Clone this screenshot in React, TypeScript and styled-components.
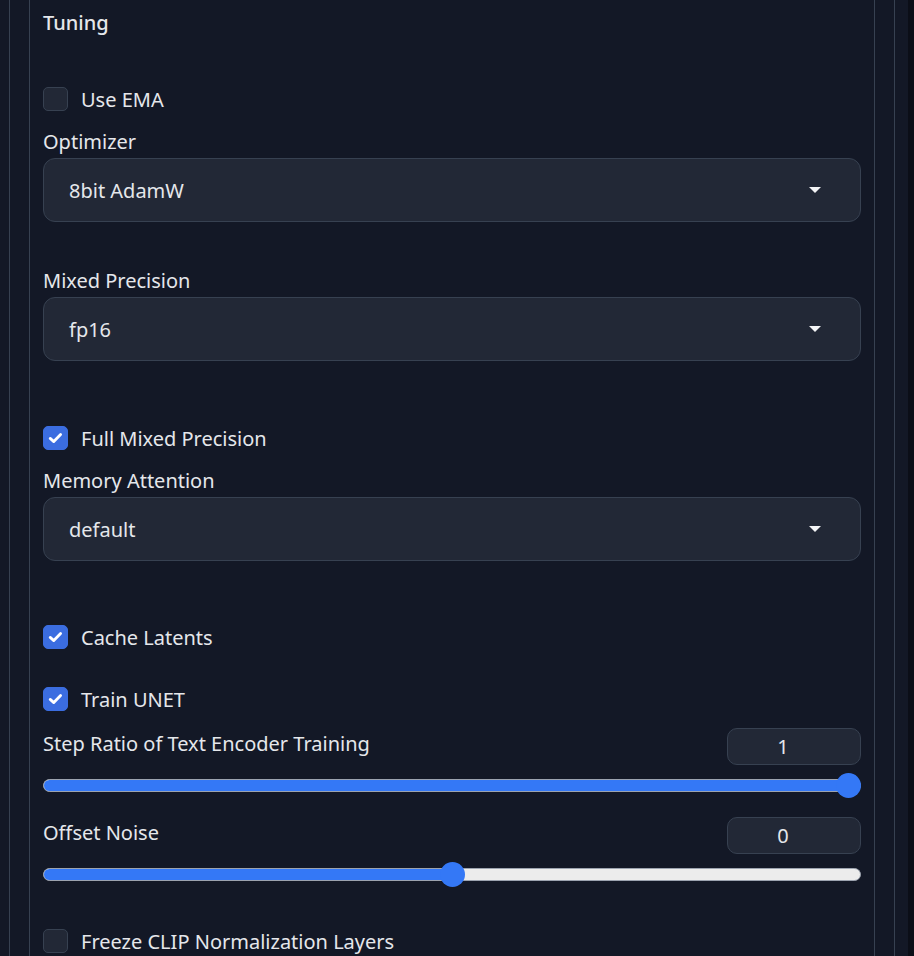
import React from 'react';
import styled, { createGlobalStyle } from 'styled-components';

const GlobalStyle = createGlobalStyle`
  html, body {
    margin: 0;
    padding: 0;
    background: #0b0e17;
  }
  body {
    font-family: "Noto Sans", Lato, sans-serif;
    color: #e5e7eb;
  }
`;

const Page = styled.div`
  width: 908px;
  height: 956px;
  background: #131826;
  padding-left: 9px;
  box-sizing: border-box;
  overflow: hidden;
`;

const OuterPanel = styled.div`
  width: 886px;
  height: 100%;
  box-sizing: border-box;
  border-left: 1px solid #374151;
  border-right: 1px solid #374151;
  padding: 0 19px;
`;

const InnerPanel = styled.div`
  height: 100%;
  box-sizing: border-box;
  border-left: 1px solid #374151;
  border-right: 1px solid #374151;
  padding: 0 13px;
  display: flex;
  flex-direction: column;
`;

const Heading = styled.div`
  margin-top: 11px;
  font-size: 20px;
  line-height: 24px;
  font-weight: 500;
`;

const Label = styled.div<{ $top: number }>`
  margin-top: ${p => p.$top}px;
  font-size: 20px;
  line-height: 24px;
  color: #e5e7eb;
`;

const CheckRow = styled.label<{ $top: number }>`
  margin-top: ${p => p.$top}px;
  display: flex;
  align-items: center;
  gap: 13px;
  height: 24px;
  font-size: 20px;
  cursor: pointer;
`;

const Box = styled.span<{ $on: boolean }>`
  width: 25px;
  height: 24px;
  box-sizing: border-box;
  border-radius: 5px;
  display: flex;
  align-items: center;
  justify-content: center;
  background: ${p => (p.$on ? '#3b6de0' : '#222836')};
  border: 1px solid ${p => (p.$on ? '#3b6de0' : '#374151')};
`;

const Select = styled.div<{ $top: number }>`
  margin-top: ${p => p.$top}px;
  height: 64px;
  box-sizing: border-box;
  border: 1px solid #374151;
  border-radius: 12px;
  background: #222836;
  display: flex;
  align-items: center;
  justify-content: space-between;
  padding: 0 39px 0 25px;
  font-size: 20px;
`;

const Caret = styled.span`
  width: 0;
  height: 0;
  border-left: 6px solid transparent;
  border-right: 6px solid transparent;
  border-top: 6px solid #f3f4f6;
`;

const SliderHead = styled.div<{ $top: number }>`
  margin-top: ${p => p.$top}px;
  display: flex;
  align-items: center;
  justify-content: space-between;
  height: 37px;
`;

const SliderLabel = styled.span`
  font-size: 20px;
  line-height: 24px;
  margin-top: -5px;
`;

const NumberBox = styled.div`
  width: 134px;
  height: 37px;
  box-sizing: border-box;
  border: 1px solid #374151;
  border-radius: 10px;
  background: #222836;
  display: flex;
  align-items: center;
  justify-content: center;
  padding-right: 22px;
  font-size: 20px;
`;

const Track = styled.div`
  margin-top: 8px;
  position: relative;
  height: 25px;
`;

const Rail = styled.div`
  position: absolute;
  left: 0;
  right: 0;
  top: 6px;
  height: 13px;
  box-sizing: border-box;
  border-radius: 7px;
  background: #ececec;
  border: 1px solid #9ca3af;
  overflow: hidden;
`;

const Fill = styled.div`
  height: 100%;
  background: #3478f6;
`;

const Thumb = styled.div`
  position: absolute;
  top: 0;
  width: 25px;
  height: 25px;
  border-radius: 50%;
  background: #3478f6;
`;

const Check = () => (
  <svg width="15" height="12" viewBox="0 0 15 12">
    <path d="M2.2 6.4 L5.8 9.6 L12.6 2.6" fill="none" stroke="#fff" strokeWidth="2.8" strokeLinecap="round" strokeLinejoin="round" />
  </svg>
);

const Checkbox = ({ label, on, top }: { label: string; on: boolean; top: number }) => (
  <CheckRow $top={top}>
    <Box $on={on}>{on && <Check />}</Box>
    {label}
  </CheckRow>
);

const Dropdown = ({ label, value, top }: { label: string; value: string; top: number }) => (
  <>
    <Label $top={top}>{label}</Label>
    <Select $top={4}>
      <span>{value}</span>
      <Caret />
    </Select>
  </>
);

const Slider = ({ label, value, min, max, top }: { label: string; value: number; min: number; max: number; top: number }) => {
  const pct = (value - min) / (max - min);
  return (
    <>
      <SliderHead $top={top}>
        <SliderLabel>{label}</SliderLabel>
        <NumberBox>{value}</NumberBox>
      </SliderHead>
      <Track>
        <Rail>
          <Fill style={{ width: `calc(${pct} * (100% - 25px) + 12px)` }} />
        </Rail>
        <Thumb style={{ left: `calc(${pct} * (100% - 25px))` }} />
      </Track>
    </>
  );
};

export default function App() {
  return (
    <>
      <GlobalStyle />
      <Page>
        <OuterPanel>
          <InnerPanel>
            <Heading>Tuning</Heading>
            <Checkbox label="Use EMA" on={false} top={52} />
            <Dropdown label="Optimizer" value="8bit AdamW" top={19} />
            <Dropdown label="Mixed Precision" value="fp16" top={47} />
            <Checkbox label="Full Mixed Precision" on top={65} />
            <Dropdown label="Memory Attention" value="default" top={19} />
            <Checkbox label="Cache Latents" on top={64} />
            <Checkbox label="Train UNET" on top={38} />
            <Slider label="Step Ratio of Text Encoder Training" value={1} min={0} max={1} top={17} />
            <Slider label="Offset Noise" value={0} min={-1} max={1} top={19} />
            <Checkbox label="Freeze CLIP Normalization Layers" on={false} top={42} />
          </InnerPanel>
        </OuterPanel>
      </Page>
    </>
  );
}
